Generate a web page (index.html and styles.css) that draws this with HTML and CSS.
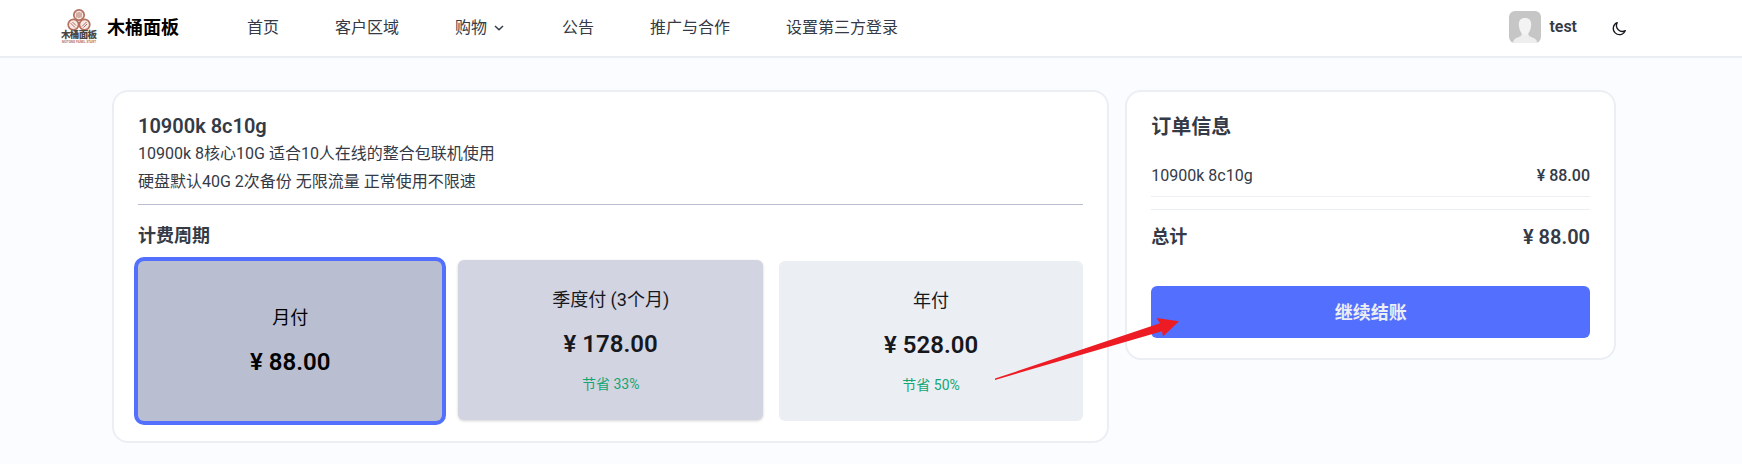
FILE: index.html
```
<!DOCTYPE html>
<html lang="zh-CN">
<head>
<meta charset="utf-8">
<title>木桶面板</title>
<link rel="stylesheet" href="styles.css">
</head>
<body>
<header class="topbar">
  <a class="brand">
    <svg class="logo" width="38" height="36" viewBox="0 0 38 36">
      <g fill="#f7e9e5" stroke="#b5705f" stroke-width="1.7">
        <circle cx="19" cy="7" r="5.2"/><circle cx="13.4" cy="16.6" r="5.2"/><circle cx="24.6" cy="16.6" r="5.2"/>
      </g>
      <g fill="none" stroke="#b5705f" stroke-width="1">
        <path d="M17 4.5v5M19 4v6M21 4.5v5M10.5 15l4.5 4.5M12.5 14l3.5 3.5M22 18.5l4.5-4.5M23.5 19.5l3.5-3.5"/>
      </g>
      <text class="logo-name" x="1" y="30" textLength="36">木桶面板</text>
      <text class="logo-sub" x="2" y="34.5" textLength="34">MUTONG PANEL START</text>
    </svg>
    <span class="brand-name">木桶面板</span>
  </a>
  <nav class="menu">
    <a>首页</a>
    <a>客户区域</a>
    <a class="has-menu">购物<svg width="10" height="6" viewBox="0 0 10 6"><path d="M1 1l4 3.800L9 1" fill="none" stroke="#343a46" stroke-width="1.500"/></svg></a>
    <a>公告</a>
    <a>推广与合作</a>
    <a>设置第三方登录</a>
  </nav>
  <div class="account">
    <svg class="avatar" width="32" height="32" viewBox="0 0 32 32">
      <rect width="32" height="32" fill="#c6c6c6"/>
      <path d="M4 32c.4-4 3-5 8-7l1-3h6l1 3c5 2 8 3 8.400 7z" fill="#eee"/>
      <path d="M16 7c4.500 0 6.300 2.700 6.200 6.500-.1 5.500-3 10.700-6.200 10.700s-6.100-5.200-6.200-10.700C9.700 9.700 11.500 7 16 7z" fill="#f3f3f3"/>
    </svg>
    <span class="user">test</span>
    <svg class="moon" width="16" height="16" viewBox="0 0 16 16"><path d="M6.200 1.700A6.200 6.200 0 1 0 14.300 9.600 5.900 5.900 0 0 1 6.200 1.700z" fill="none" stroke="#16181d" stroke-width="1.300" stroke-linejoin="round"/></svg>
  </div>
</header>
<main class="page">
  <section class="card plan">
    <h1 class="plan-name">10900k 8c10g</h1>
    <p class="desc">10900k 8核心10G 适合10人在线的整合包联机使用</p>
    <p class="desc">硬盘默认40G 2次备份 无限流量 正常使用不限速</p>
    <h2 class="cycle-title">计费周期</h2>
    <div class="cycles">
      <div class="cycle selected"><span class="period">月付</span><strong class="price">¥ 88.00</strong></div>
      <div class="cycle raised"><span class="period">季度付 (3个月)</span><strong class="price">¥ 178.00</strong><span class="save">节省 33%</span></div>
      <div class="cycle"><span class="period">年付</span><strong class="price">¥ 528.00</strong><span class="save">节省 50%</span></div>
    </div>
  </section>
  <aside class="card order">
    <h2 class="order-title">订单信息</h2>
    <div class="row"><span>10900k 8c10g</span><span class="amount">¥ 88.00</span></div>
    <div class="row total"><span>总计</span><span class="sum">¥ 88.00</span></div>
    <button class="checkout">继续结账</button>
  </aside>
</main>
<svg class="arrow" width="185" height="64" viewBox="0 0 185 64"><path d="M0 60.600L165 5.200 161.500 0 184 3.300 168 18.600 167 13.200 0 62z" fill="#ed1c24"/></svg>
</body>
</html>
```
FILE: styles.css
```
* { box-sizing: border-box; }
body {
  margin: 0;
  height: 464px;
  overflow: hidden;
  background: #fbfcff;
  color: #343a46;
  font: 16px/24px Roboto, "Noto Sans CJK SC", sans-serif;
}
h1, h2, p { margin: 0; }
svg { display: block; flex: none; }

.topbar {
  display: flex;
  align-items: center;
  height: 58px;
  padding: 0 115px 2px 60px;
  background: #fff;
  border-bottom: 2px solid #ebeef3;
}
.brand { display: flex; align-items: center; gap: 9px; width: 187px; padding-bottom: 2px; }
.logo-name { font: 900 9.500px "Noto Sans CJK SC", sans-serif; fill: #4b4543; }
.logo-sub { font: 700 3px Roboto, sans-serif; fill: #b5705f; }
.brand-name { color: #000; font-size: 18px; font-weight: 700; padding-top: 4px; }
.menu { display: flex; gap: 56px; padding-top: 2px; }
.has-menu { display: flex; align-items: center; gap: 7px; margin-right: 2px; }
.account { display: flex; align-items: center; margin-left: auto; }
.avatar { border-radius: 6px; }
.user { margin-left: 8px; font-weight: 600; padding-bottom: 1px; }
.moon { margin: 4px 0 0 34px; }

.page {
  display: grid;
  grid-template-columns: 997.330px 490.670px;
  gap: 16px;
  align-items: start;
  padding: 32px 112px 0;
}
.card {
  background: #fff;
  border: 2px solid #ebeef3;
  border-radius: 16px;
  padding: 24px;
}
.plan { height: 353px; padding-top: 20px; }
.plan-name { font-size: 20px; line-height: 28px; font-weight: 600; }
.desc { line-height: 28px; }
.desc + .desc { height: 29px; }
.cycle-title {
  border-top: 1px solid #b9bdd2;
  margin-top: 7px;
  padding-top: 17px;
  font-size: 18px;
  line-height: 28px;
}
.cycles { display: grid; grid-template-columns: repeat(3, 1fr); gap: 16px; margin-top: 11px; }
.cycle {
  display: flex;
  flex-direction: column;
  align-items: center;
  justify-content: center;
  height: 160px;
  border-radius: 6px;
  background: #ebeef3;
  color: #16181d;
}
.selected { background: #b9bed1; color: #000; box-shadow: 0 0 0 4px #5270fd; }
.raised { background: #d2d4e1; transform: translateY(-1px); box-shadow: 0 1px 3px rgba(0, 0, 0, .18); }
.period { font-size: 18px; line-height: 28px; }
.price { font-size: 24px; line-height: 32px; font-weight: 600; margin-top: 14px; }
.save { font-size: 14px; line-height: 20px; margin-top: 14px; color: #14a673; }

.order { height: 270px; padding-top: 21px; }
.order-title { font-size: 20px; line-height: 28px; }
.row {
  display: flex;
  justify-content: space-between;
  align-items: center;
  height: 38px;
  margin-top: 18px;
  padding-bottom: 3px;
  border-bottom: 1px solid #ebeef3;
}
.amount { font-weight: 500; }
.total {
  height: 54px;
  margin-top: 12px;
  padding-bottom: 0;
  border: 0;
  border-top: 1px solid #ebeef3;
  font-size: 18px;
  font-weight: 700;
}
.sum { font-size: 20px; font-weight: 600; }
.checkout {
  display: block;
  width: 100%;
  height: 52px;
  margin-top: 23px;
  padding: 1px 0 0;
  border: 0;
  border-radius: 6px;
  background: #5270fd;
  color: #ebeef3;
  font: 700 18px/28px Roboto, "Noto Sans CJK SC", sans-serif;
}
.arrow { position: absolute; left: 995px; top: 318px; }
```
